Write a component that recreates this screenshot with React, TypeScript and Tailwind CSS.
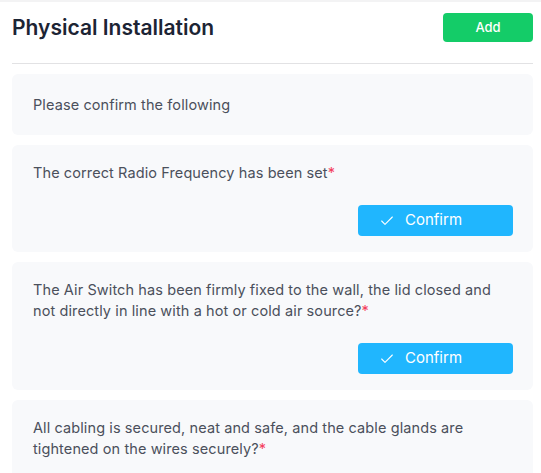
import { Check } from 'lucide-react';

interface Item {
  text: string;
  required?: boolean;
  confirm?: boolean;
}

const items: Item[] = [
  { text: 'Please confirm the following' },
  { text: 'The correct Radio Frequency has been set', required: true, confirm: true },
  {
    text: 'The Air Switch has been firmly fixed to the wall, the lid closed and not directly in line with a hot or cold air source?',
    required: true,
    confirm: true,
  },
  {
    text: 'All cabling is secured, neat and safe, and the cable glands are tightened on the wires securely?',
    required: true,
    confirm: true,
  },
];

function ChecklistCard({ item }: { item: Item }) {
  return (
    <div
      className={
        item.confirm
          ? 'rounded-md bg-[#f8f9fb] pl-[21px] pr-5 pt-[17px] pb-4'
          : 'rounded-md bg-[#f8f9fb] pl-[21px] pr-5 py-5'
      }
    >
      <p className="text-[14.5px] leading-[21px] tracking-[0.1px] text-[#4b505c]">
        {item.text}
        {item.required && <span className="text-[#f43f5e]">*</span>}
      </p>
      {item.confirm && (
        <div className="mt-[22px] flex justify-end">
          <button className="flex h-[31px] w-[155px] items-center gap-[10px] rounded-[4px] bg-[#20b6fe] pl-[21px] text-[15px] text-white">
            <Check size={16} strokeWidth={1.6} />
            Confirm
          </button>
        </div>
      )}
    </div>
  );
}

export default function App() {
  return (
    <div
      className="min-h-screen overflow-hidden border-t-2 border-[#f3f3f4] bg-white pl-3 pr-2"
      style={{ fontFamily: 'Inter, "Open Sans", sans-serif' }}
    >
      {/* Header */}
      <div className="flex items-center justify-between pt-[11px]">
        <h1 className="text-[21px] font-semibold leading-[29px] text-[#1c2434]">Physical Installation</h1>
        <button className="h-[29px] w-[90px] rounded-[4px] bg-[#14cc68] text-[13px] font-medium text-white">
          Add
        </button>
      </div>
      <div className="mt-[21px] h-px bg-[#e2e2e4]" />

      {/* Checklist */}
      <div className="mt-[10px] flex flex-col gap-[10px]">
        {items.map((item, i) => (
          <ChecklistCard key={i} item={item} />
        ))}
      </div>
    </div>
  );
}
